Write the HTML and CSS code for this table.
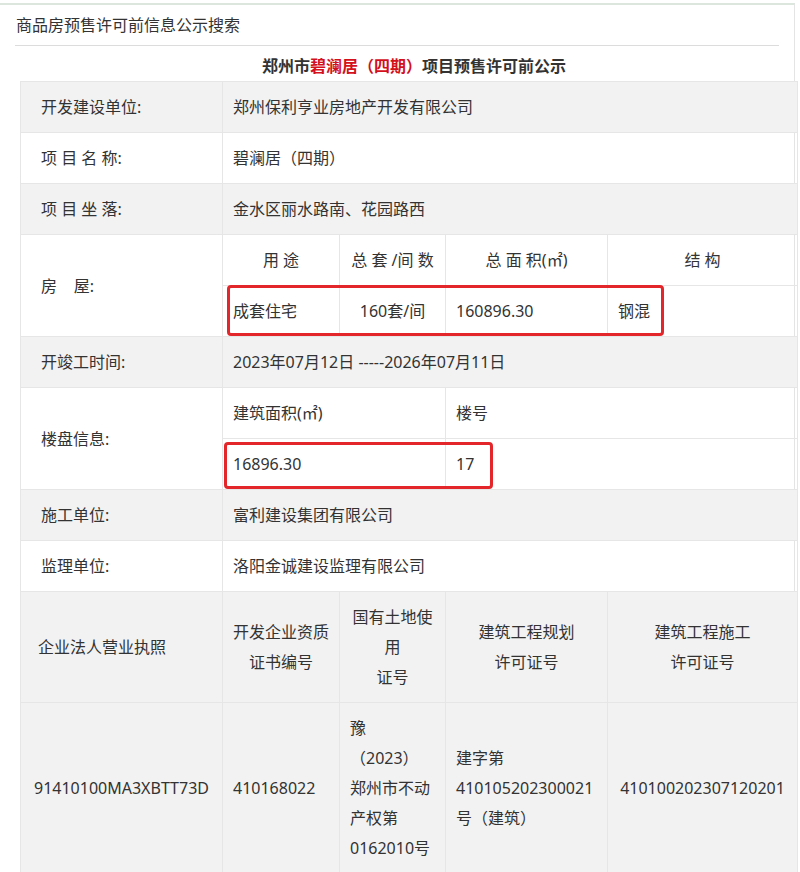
FILE: index.html
```html
<!DOCTYPE html>
<html lang="zh-CN">
<head>
  <meta charset="UTF-8" />
  <meta name="viewport" content="width=device-width, initial-scale=1">
  <title>商品房预售许可前信息公示</title>
  <link rel="stylesheet" href="styles.css">
</head>
<body>
  <div class="page">
    <div class="page-head">商品房预售许可前信息公示搜索</div>
    <h2 class="title">郑州市<span class="hl">碧澜居（四期）</span>项目预售许可前公示</h2>

    <div class="sheet">
      <table class="info">
        <colgroup>
          <col class="w1"><col class="w2"><col class="w3"><col class="w4"><col class="w5">
        </colgroup>
        <tr class="grey">
          <td class="label">开发建设单位:</td>
          <td colspan="4">郑州保利亨业房地产开发有限公司</td>
        </tr>
        <tr>
          <td class="label">项&nbsp;目&nbsp;名&nbsp;称:</td>
          <td colspan="4">碧澜居（四期）</td>
        </tr>
        <tr class="grey">
          <td class="label">项&nbsp;目&nbsp;坐&nbsp;落:</td>
          <td colspan="4">金水区丽水路南、花园路西</td>
        </tr>
        <tr>
          <td class="label" rowspan="2">房&nbsp;&nbsp;&nbsp;&nbsp;屋:</td>
          <td class="center">用&nbsp;途</td>
          <td class="center">总&nbsp;套&nbsp;/间&nbsp;数</td>
          <td class="center">总&nbsp;面&nbsp;积(㎡)</td>
          <td class="center">结&nbsp;构</td>
        </tr>
        <tr>
          <td>成套住宅</td>
          <td class="center">160套/间</td>
          <td>160896.30</td>
          <td>钢混</td>
        </tr>
        <tr class="grey">
          <td class="label">开竣工时间:</td>
          <td colspan="4">2023年07月12日 -----2026年07月11日</td>
        </tr>
        <tr>
          <td class="label" rowspan="2">楼盘信息:</td>
          <td colspan="2">建筑面积(㎡)</td>
          <td colspan="2">楼号</td>
        </tr>
        <tr>
          <td colspan="2">16896.30</td>
          <td colspan="2">17</td>
        </tr>
        <tr class="grey">
          <td class="label">施工单位:</td>
          <td colspan="4">富利建设集团有限公司</td>
        </tr>
        <tr>
          <td class="label">监理单位:</td>
          <td colspan="4">洛阳金诚建设监理有限公司</td>
        </tr>
        <tr class="grey tall">
          <td class="lead">企业法人营业执照</td>
          <td class="center">开发企业资质<br>证书编号</td>
          <td class="center">国有土地使<br>用<br>证号</td>
          <td class="center">建筑工程规划<br>许可证号</td>
          <td class="center">建筑工程施工<br>许可证号</td>
        </tr>
        <tr class="grey tall">
          <td class="center">91410100MA3XBTT73D</td>
          <td>410168022</td>
          <td>豫<br>（2023）<br>郑州市不动<br>产权第<br>0162010号</td>
          <td>建字第<br>410105202300021<br>号（建筑）</td>
          <td class="center">410100202307120201</td>
        </tr>
      </table>

      <!-- red annotation boxes drawn over the table -->
      <div class="mark mark-house"></div>
      <div class="mark mark-floor"></div>
    </div>
  </div>
</body>
</html>
```

FILE: styles.css
```css
/* plain info page, grey striped table */
body {
  margin: 0;
  background: #fff;
  color: #333;
  font-family: "Noto Sans", "Noto Sans CJK SC", sans-serif;
  font-size: 16px;
}
.page {
  width: 795px;
  margin-top: 3px;
  border-top: 2px solid #dde6dd;
  border-right: 1px solid #e4e4e4;
  box-sizing: border-box;
  min-height: 869px;
}
.page-head {
  margin: 0 15px;
  height: 41px;
  line-height: 40px;
  padding-left: 1px;
  border-bottom: 1px solid #dcdcdc;
  box-sizing: border-box;
  color: #333;
}
.title {
  margin: 0;
  height: 35px;
  padding: 6px 0 0 34px;
  box-sizing: border-box;
  line-height: 29px;
  text-align: center;
  font-size: 16px;
  font-weight: bold;
  color: #333;
}
.title .hl {
  color: #d3101c;
}
.sheet {
  position: relative;
  padding-left: 20px;
}
.info {
  width: 777px;
  table-layout: fixed;
  border-collapse: collapse;
}
.w1 { width: 202px; }
.w2 { width: 117px; }
.w3 { width: 106px; }
.w4 { width: 162px; }
.w5 { width: 190px; }
.info td {
  height: 51px;
  padding: 0 10px;
  border: 1px solid #e6e6e6;
  line-height: 30px;
  vertical-align: middle;
  white-space: nowrap;
  box-sizing: border-box;
}
.info tr.grey td {
  background: #f2f2f2;
}
.info td.label {
  padding-left: 20px;
}
.info td.center {
  text-align: center;
}
.info td.lead {
  padding-left: 17px;
}
.info tr.tall td {
  height: auto;
  padding-top: 10px;
  padding-bottom: 10px;
}
.mark {
  position: absolute;
  border: 3px solid #e3262a;
  border-radius: 4px;
  box-sizing: border-box;
}
.mark-house {
  left: 227px;
  top: 204px;
  width: 437px;
  height: 51px;
}
.mark-floor {
  left: 224px;
  top: 361px;
  width: 269px;
  height: 47px;
}
```
